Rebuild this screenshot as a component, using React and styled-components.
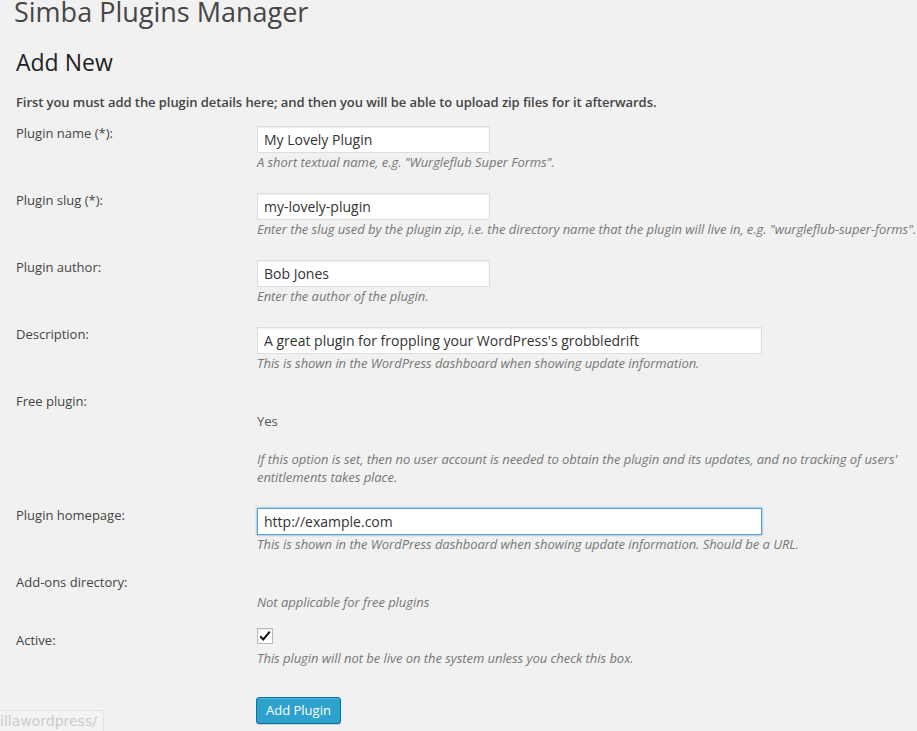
import React from "react";
import styled, { createGlobalStyle } from "styled-components";

const Global = createGlobalStyle`
  html, body { margin: 0; padding: 0; background: #f1f1f1; }
  body {
    font-family: "Open Sans", "Noto Sans", sans-serif;
    font-size: 13px;
    color: #444;
    overflow: hidden;
  }
`;

const Page = styled.div`
  padding: 0 16px;
  height: 731px;
  box-sizing: border-box;
`;

const Title = styled.h1`
  margin: -6px 0 0 -2px;
  font-size: 27px;
  line-height: 35px;
  font-weight: 400;
  color: #464646;
`;

const SubTitle = styled.h2`
  margin: 18px 0 0;
  font-size: 23px;
  line-height: 30px;
  font-weight: 400;
  color: #222;
`;

const Intro = styled.p`
  margin: 16px 0 0;
  font-weight: 600;
  line-height: 18px;
  letter-spacing: -0.07px;
`;

const Rows = styled.div`
  margin-top: 10px;
  display: flex;
  flex-direction: column;
  gap: 17px;
`;

const Row = styled.div`
  display: grid;
  grid-template-columns: 241px 1fr;
`;

const Label = styled.div`
  padding-top: 3px;
  line-height: 18px;
`;

const Field = styled.div`
  display: flex;
  flex-direction: column;
  align-items: flex-start;
`;

const Input = styled.div`
  margin-top: 5px;
  box-sizing: border-box;
  width: ${(p) => (p.$wide ? "505px" : "233px")};
  height: 27px;
  padding: 0 6px;
  background: #fff;
  border: 1px solid ${(p) => (p.$focus ? "#5b9dd9" : "#ddd")};
  box-shadow: ${(p) =>
    p.$focus ? "0 0 2px rgba(30,140,190,.8)" : "inset 0 1px 2px rgba(0,0,0,.07)"};
  font-size: 14px;
  line-height: 25px;
  color: #333;
  white-space: nowrap;
`;

const Desc = styled.p`
  margin: ${(p) => p.$mt || 0}px 0 0;
  font-style: italic;
  line-height: 18px;
  letter-spacing: -0.05px;
  color: #777;
  white-space: nowrap;
`;

const Value = styled.div`
  margin-top: 23px;
  line-height: 18px;
  color: #555;
`;

const Check = styled.div`
  box-sizing: border-box;
  width: 16px;
  height: 16px;
  border: 1px solid #b4b9be;
  background: #fff;
  box-shadow: inset 0 1px 2px rgba(0,0,0,.1);
  display: flex;
  align-items: center;
  justify-content: center;
`;

const Submit = styled.div`
  margin-top: 30px;
  padding-left: 240px;
`;

const Button = styled.button`
  box-sizing: border-box;
  height: 27px;
  padding: 0 9px;
  background: #2ea2cc;
  border: 1px solid #0074a2;
  border-radius: 3px;
  box-shadow: inset 0 1px 0 rgba(120,200,230,.5), 0 1px 0 rgba(0,0,0,.15);
  color: #fff;
  font-family: "Open Sans", "Noto Sans", sans-serif;
  font-size: 13px;
  line-height: 25px;
`;

const Status = styled.div`
  position: fixed;
  left: 0;
  bottom: 0;
  height: 20px;
  padding: 0 6px 0 0;
  background: #f3f3f3;
  border: 1px solid #e4e4e4;
  border-left: none;
  border-bottom: none;
  border-top-right-radius: 3px;
  font-family: "DejaVu Sans", sans-serif;
  font-size: 14px;
  line-height: 20px;
  color: #cbcbcb;
`;

const fields = [
  { label: "Plugin name (*):", value: "My Lovely Plugin", desc: 'A short textual name, e.g. "Wurgleflub Super Forms".' },
  { label: "Plugin slug (*):", value: "my-lovely-plugin", desc: 'Enter the slug used by the plugin zip, i.e. the directory name that the plugin will live in, e.g. "wurgleflub-super-forms".' },
  { label: "Plugin author:", value: "Bob Jones", desc: "Enter the author of the plugin." },
  { label: "Description:", value: "A great plugin for froppling your WordPress's grobbledrift", desc: "This is shown in the WordPress dashboard when showing update information.", wide: true },
];

export default function App() {
  return (
    <Page>
      <Global />
      <Title>Simba Plugins Manager</Title>
      <SubTitle>Add New</SubTitle>
      <Intro>First you must add the plugin details here; and then you will be able to upload zip files for it afterwards.</Intro>
      <Rows>
        {fields.map((f) => (
          <Row key={f.label}>
            <Label>{f.label}</Label>
            <Field>
              <Input $wide={f.wide}>{f.value}</Input>
              <Desc>{f.desc}</Desc>
            </Field>
          </Row>
        ))}
        <Row>
          <Label>Free plugin:</Label>
          <Field>
            <Value>Yes</Value>
            <Desc $mt={20}>
              If this option is set, then no user account is needed to obtain the plugin and its updates, and no tracking of users'
              <br />
              entitlements takes place.
            </Desc>
          </Field>
        </Row>
        <Row>
          <Label>Plugin homepage:</Label>
          <Field>
            <Input $wide $focus>http://example.com</Input>
            <Desc>This is shown in the WordPress dashboard when showing update information. Should be a URL.</Desc>
          </Field>
        </Row>
        <Row>
          <Label>Add-ons directory:</Label>
          <Field>
            <Value>
              <Desc as="span">Not applicable for free plugins</Desc>
            </Value>
          </Field>
        </Row>
        <Row>
          <Label>Active:</Label>
          <Field>
            <Check>
              <svg width="14" height="14" viewBox="0 0 14 14">
                <path d="M2.2 7.2 L5.3 10.4 L11.8 2.6" fill="none" stroke="#111" strokeWidth="2" />
              </svg>
            </Check>
            <Desc $mt={5}>This plugin will not be live on the system unless you check this box.</Desc>
          </Field>
        </Row>
      </Rows>
      <Submit>
        <Button>Add Plugin</Button>
      </Submit>
      <Status>illawordpress/</Status>
    </Page>
  );
}
